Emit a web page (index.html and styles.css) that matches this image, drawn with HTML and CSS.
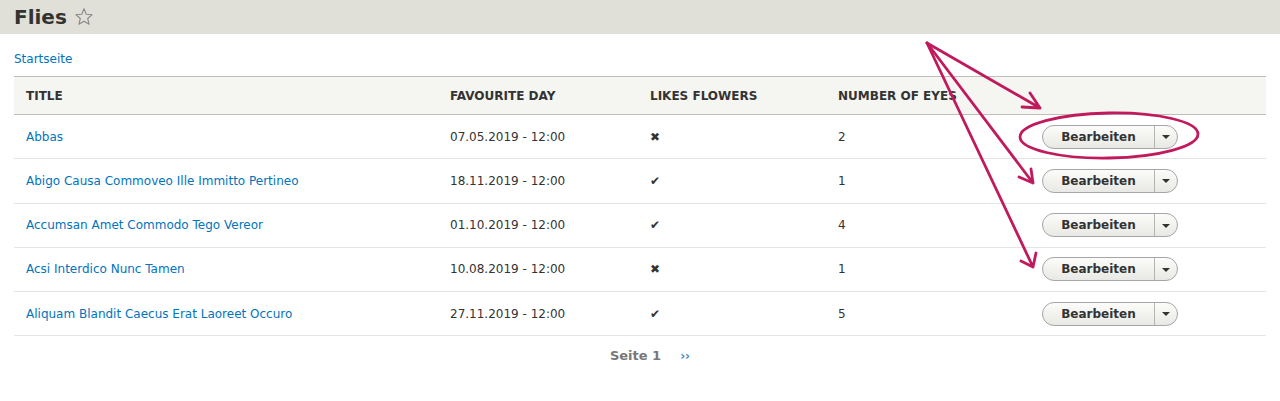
FILE: index.html
```html
<!DOCTYPE html>
<html lang="de">
<head>
<meta charset="utf-8">
<title>Flies</title>
<link rel="stylesheet" href="styles.css">
</head>
<body>
<header class="page-head">
  <h1 class="page-title">Flies</h1>
  <svg class="star" width="20" height="20" viewBox="0 0 20 20"><path d="M10 1.8 L12.3 7.3 L18.2 7.7 L13.7 11.5 L15.1 17.3 L10 14.2 L4.9 17.3 L6.3 11.5 L1.8 7.7 L7.7 7.3 Z" fill="none" stroke="#8a8a84" stroke-width="1.1" stroke-linejoin="round"/></svg>
</header>
<main class="content">
  <nav class="breadcrumb"><a href="#">Startseite</a></nav>
  <table class="views">
    <colgroup><col class="c1"><col class="c2"><col class="c3"><col class="c4"><col class="c5"></colgroup>
    <thead>
      <tr><th>Title</th><th>Favourite day</th><th>Likes flowers</th><th>Number of eyes</th><th></th></tr>
    </thead>
    <tbody>
      <tr><td><a href="#">Abbas</a></td><td>07.05.2019 - 12:00</td><td class="mark">✖</td><td>2</td><td><div class="drop"><span class="main">Bearbeiten</span><span class="toggle"><i class="caret"></i></span></div></td></tr>
      <tr><td><a href="#">Abigo Causa Commoveo Ille Immitto Pertineo</a></td><td>18.11.2019 - 12:00</td><td class="mark">✔</td><td>1</td><td><div class="drop"><span class="main">Bearbeiten</span><span class="toggle"><i class="caret"></i></span></div></td></tr>
      <tr><td><a href="#">Accumsan Amet Commodo Tego Vereor</a></td><td>01.10.2019 - 12:00</td><td class="mark">✔</td><td>4</td><td><div class="drop"><span class="main">Bearbeiten</span><span class="toggle"><i class="caret"></i></span></div></td></tr>
      <tr><td><a href="#">Acsi Interdico Nunc Tamen</a></td><td>10.08.2019 - 12:00</td><td class="mark">✖</td><td>1</td><td><div class="drop"><span class="main">Bearbeiten</span><span class="toggle"><i class="caret"></i></span></div></td></tr>
      <tr><td><a href="#">Aliquam Blandit Caecus Erat Laoreet Occuro</a></td><td>27.11.2019 - 12:00</td><td class="mark">✔</td><td>5</td><td><div class="drop"><span class="main">Bearbeiten</span><span class="toggle"><i class="caret"></i></span></div></td></tr>
    </tbody>
  </table>
  <nav class="pager"><span class="current">Seite 1</span><a href="#" class="next">››</a></nav>
</main>
<svg class="annot" width="1280" height="401" viewBox="0 0 1280 401">
  <g fill="none" stroke="#c01a5c" stroke-width="2.8" stroke-linecap="round" stroke-linejoin="round">
    <path d="M927 43 L1040 108 M1030 93 L1040 108 L1022 107"/>
    <path d="M927 43 L1033 183 M1031 169 L1033 183 L1019 177"/>
    <path d="M927 43 L1033 267 M1036 253 L1033 267 L1021 261"/>
    <ellipse cx="1109" cy="135.5" rx="89" ry="22.5" transform="rotate(-1 1109 135.5)"/>
  </g>
</svg>
</body>
</html>
```
FILE: styles.css
```css
html, body { margin: 0; padding: 0; background: #fff; }
body { font-family: "DejaVu Sans", "Liberation Sans", sans-serif; color: #333; font-size: 12px; position: relative; height: 401px; overflow: hidden; }
a { color: #0074bd; text-decoration: none; }
.page-head { height: 34px; background: #e0e0d8; display: flex; align-items: center; padding-left: 14px; }
.page-title { margin: 0; font-size: 20px; font-weight: bold; line-height: 24px; color: #333; }
.star { margin-left: 7px; margin-top: -1px; }
.content { padding: 0 14px; }
.breadcrumb { padding-top: 18px; line-height: 14px; font-size: 12px; height: 14px; margin-bottom: 10px; }
.views { width: 100%; border-collapse: collapse; table-layout: fixed; }
.c1 { width: 424px; } .c2 { width: 200px; } .c3 { width: 188px; } .c4 { width: 204px; }
.views th { background: #f5f5f2; border-top: 1px solid #bfbfba; border-bottom: 1px solid #bfbfba; text-align: left; font-size: 12px; font-weight: bold; text-transform: uppercase; padding: 0 12px; height: 37px; color: #333; }
.views td { padding: 0 12px; height: 43.25px; border-bottom: 1px solid #e4e4e2; font-size: 12px; color: #333; white-space: nowrap; }
.mark { font-size: 10px; }
.drop { display: inline-flex; width: 136px; height: 24px; box-sizing: border-box; border: 1px solid #a6a6a6; border-radius: 12px; background: linear-gradient(#fcfcfa, #e8e8e4); vertical-align: middle; }
.drop .main { flex: 1; display: flex; align-items: center; justify-content: center; font-weight: bold; font-size: 12px; color: #333; border-right: 1px solid #b4b4b0; }
.drop .toggle { width: 22px; display: flex; align-items: center; justify-content: center; }
.caret { display: block; width: 0; height: 0; border-left: 4px solid transparent; border-right: 4px solid transparent; border-top: 4px solid #333; margin-top: 1px; margin-left: -1px; }
.pager { display: flex; justify-content: center; align-items: center; gap: 19px; padding-top: 12px; line-height: 16px; padding-left: 20px; }
.pager .current { font-weight: bold; font-size: 13px; color: #777; }
.pager .next { font-size: 12px; font-weight: bold; color: #4c86b8; }
.annot { position: absolute; left: 0; top: 0; pointer-events: none; }
```
